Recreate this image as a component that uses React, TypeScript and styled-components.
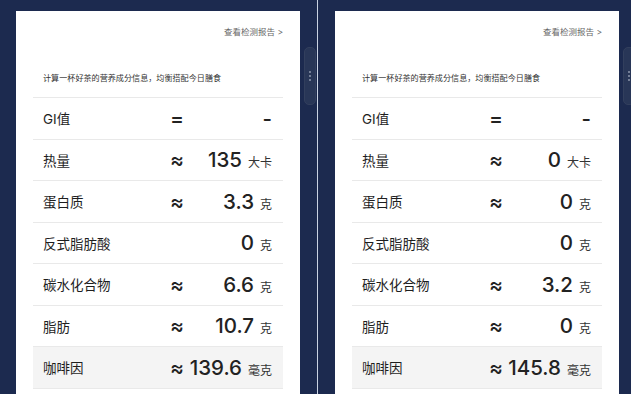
import styled, {createGlobalStyle} from "styled-components";

const GlobalStyle = createGlobalStyle`
    html, body {
        margin: 0;
        padding: 0;
        height: 100%;
        overflow: hidden;
        background: #1c2a4f;
    }

    body {
        font-family: Inter, "Noto Sans CJK SC", sans-serif;
        color: #222;
    }
`;

const Page = styled.div`
    display: flex;
    height: 100vh;
    background: #1c2a4f;
`;

const Pane = styled.div<{ $inset: number }>`
    display: flex;
    align-items: flex-start;
    width: 317px;
    flex-shrink: 0;
    padding: 11px 0 0 ${(p) => p.$inset}px;
    box-sizing: border-box;
`;

const Splitter = styled.div`
    width: 1px;
    flex-shrink: 0;
    background: #c9d2e2;
`;

const Card = styled.div`
    width: 284px;
    flex-shrink: 0;
    height: 400px;
    background: #fff;
    padding: 0 17px;
    box-sizing: border-box;
`;

const Handle = styled.div`
    flex-shrink: 0;
    margin: 36px 0 0 4px;
    width: 12px;
    height: 58px;
    border-radius: 5px;
    background: #283657;
    border: 1px solid #323f5d;
    box-sizing: border-box;
    display: flex;
    flex-direction: column;
    align-items: center;
    justify-content: center;
    gap: 2px;
`;

const Dot = styled.span`
    width: 2px;
    height: 2px;
    border-radius: 50%;
    background: #8d97ab;
`;

const ReportLink = styled.div`
    padding-top: 15px;
    text-align: right;
    font-size: 8.5px;
    line-height: 12px;
    color: #666;
`;

const Intro = styled.div`
    margin: 34px 0 13px;
    padding-left: 10px;
    font-size: 8.1px;
    line-height: 12px;
    color: #333;
`;

const List = styled.div`
    border-top: 1px solid #e9e9e9;
`;

const Row = styled.div<{ $highlight?: boolean }>`
    display: grid;
    grid-template-columns: 127px 18px 1fr;
    align-items: center;
    height: 41.5px;
    box-sizing: border-box;
    padding: 0 11px 0 10px;
    border-bottom: 1px solid #e9e9e9;
    background: ${(p) => (p.$highlight ? "#f4f4f4" : "transparent")};
`;

const Label = styled.span`
    font-size: 13.5px;
    font-weight: 400;
    color: #1e1e1e;
    white-space: nowrap;
`;

const Symbol = styled.span`
    font-size: 21px;
    font-weight: 500;
    line-height: 1;
    color: #222;
`;

const Amount = styled.span`
    display: flex;
    align-items: baseline;
    justify-content: flex-end;
    gap: 6px;
    white-space: nowrap;
`;

const Value = styled.span`
    font-size: 20.5px;
    font-weight: 500;
    color: #222;
`;

const Unit = styled.span`
    font-size: 12px;
    color: #333;
`;

type Nutrient = {
    label: string;
    sign: string;
    value: string;
    unit?: string;
    highlight?: boolean;
};

const teaA: Nutrient[] = [
    {label: "GI值", sign: "=", value: "-"},
    {label: "热量", sign: "≈", value: "135", unit: "大卡"},
    {label: "蛋白质", sign: "≈", value: "3.3", unit: "克"},
    {label: "反式脂肪酸", sign: "", value: "0", unit: "克"},
    {label: "碳水化合物", sign: "≈", value: "6.6", unit: "克"},
    {label: "脂肪", sign: "≈", value: "10.7", unit: "克"},
    {label: "咖啡因", sign: "≈", value: "139.6", unit: "毫克", highlight: true},
];

const teaB: Nutrient[] = [
    {label: "GI值", sign: "=", value: "-"},
    {label: "热量", sign: "≈", value: "0", unit: "大卡"},
    {label: "蛋白质", sign: "≈", value: "0", unit: "克"},
    {label: "反式脂肪酸", sign: "", value: "0", unit: "克"},
    {label: "碳水化合物", sign: "≈", value: "3.2", unit: "克"},
    {label: "脂肪", sign: "≈", value: "0", unit: "克"},
    {label: "咖啡因", sign: "≈", value: "145.8", unit: "毫克", highlight: true},
];

function NutritionCard({items}: { items: Nutrient[] }) {
    return (
        <Card>
            <ReportLink>查看检测报告 &gt;</ReportLink>
            <Intro>计算一杯好茶的营养成分信息，均衡搭配今日膳食</Intro>
            <List>
                {items.map((item) => (
                    <Row key={item.label} $highlight={item.highlight}>
                        <Label>{item.label}</Label>
                        <Symbol>{item.sign}</Symbol>
                        <Amount>
                            <Value>{item.value}</Value>
                            {item.unit && <Unit>{item.unit}</Unit>}
                        </Amount>
                    </Row>
                ))}
            </List>
        </Card>
    );
}

function DragHandle() {
    return (
        <Handle>
            <Dot/>
            <Dot/>
            <Dot/>
        </Handle>
    );
}

export default function App() {
    return (
        <>
            <GlobalStyle/>
            <Page>
                <Pane $inset={16}>
                    <NutritionCard items={teaA}/>
                    <DragHandle/>
                </Pane>
                <Splitter/>
                <Pane $inset={17}>
                    <NutritionCard items={teaB}/>
                    <DragHandle/>
                </Pane>
            </Page>
        </>
    );
}
